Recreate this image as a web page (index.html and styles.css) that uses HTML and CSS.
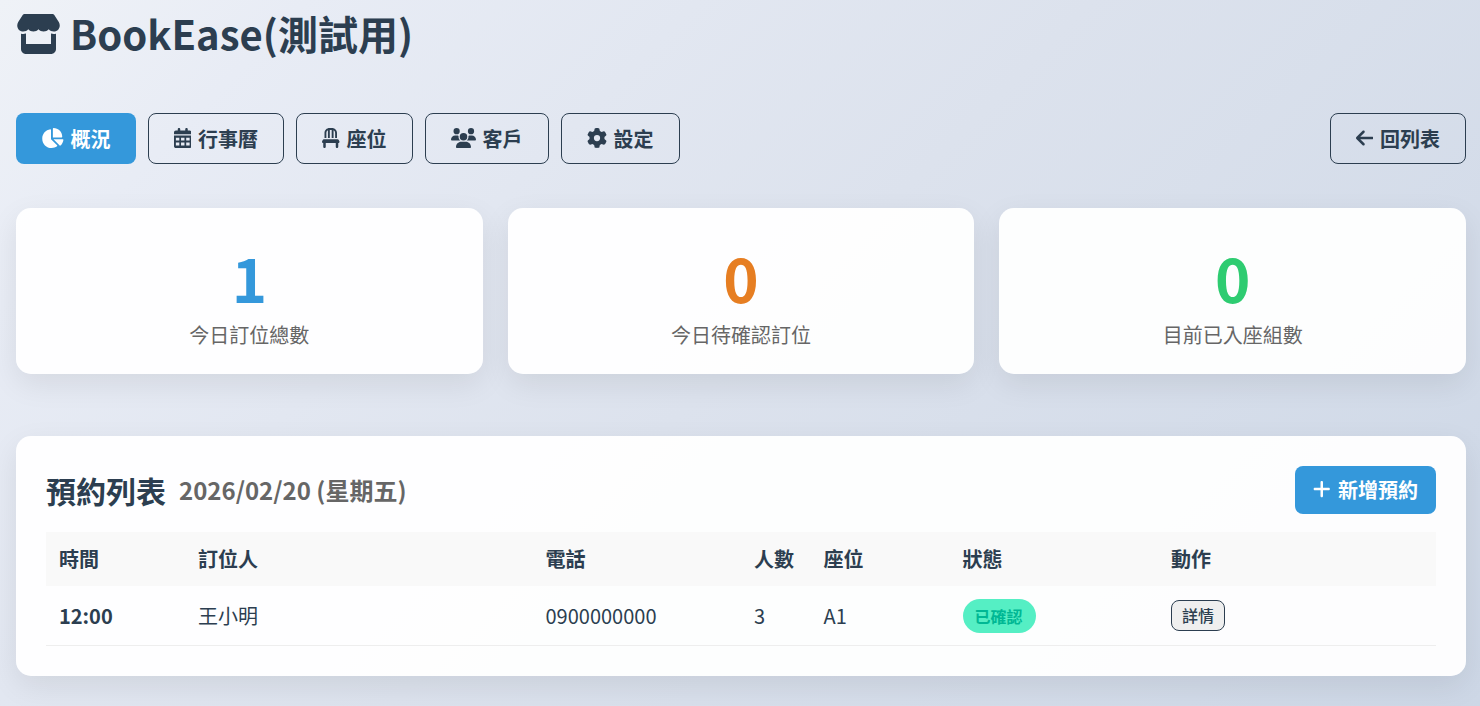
FILE: index.html
```html
<!DOCTYPE html>
<html lang="zh-Hant">
<head>
<meta charset="utf-8">
<title>BookEase</title>
<link rel="stylesheet" href="styles.css">
</head>
<body>
<div class="page">
  <header class="header">
    <svg class="header-icon" viewBox="0 0 576 512" aria-hidden="true"><path d="M547.6 103.8L490.3 13.1C485.2 5 476.1 0 466.4 0L109.6 0C99.9 0 90.8 5 85.7 13.1L28.3 103.8c-29.6 46.8-3.4 111.9 51.9 119.4c4 .5 8.1 .8 12.1 .8c26.1 0 49.3-11.4 65.2-29c15.9 17.6 39.1 29 65.2 29c26.1 0 49.3-11.4 65.2-29c15.9 17.6 39.1 29 65.2 29c26.2 0 49.3-11.4 65.2-29c16 17.6 39.1 29 65.2 29c4.1 0 8.1-.3 12.1-.8c55.5-7.4 81.8-72.5 52.1-119.4zM499.7 254.9l-.1 0c-5.3 .7-10.7 1.1-16.2 1.1c-12.4 0-24.3-1.9-35.4-5.3L448 384l-320 0 0-133.4c-11.2 3.5-23.2 5.4-35.6 5.4c-5.5 0-11-.4-16.3-1.1l-.1 0c-4.1-.6-8.1-1.3-12-2.3L64 384l0 64c0 35.3 28.7 64 64 64l320 0c35.3 0 64-28.7 64-64l0-64 0-131.4c-4 1-8 1.8-12.3 2.3z"/></svg>
    <h1 class="title">BookEase(測試用)</h1>
  </header>

  <nav class="nav">
    <button class="btn btn-primary" type="button"><svg class="icon" viewBox="0 0 576 512" aria-hidden="true"><path d="M304 240V16.6c0-9 7-16.6 16-16.6C443.7 0 544 100.3 544 224c0 9-7.6 16-16.6 16H304zM32 272C32 150.7 122.1 50.3 239 34.3c9.2-1.3 17 6.1 17 15.4V288L412.5 444.5c6.7 6.7 6.2 17.7-1.5 23.1C371.8 495.6 323.8 512 272 512C139.5 512 32 404.6 32 272zm526.4 16c9.3 0 16.6 7.8 15.4 17c-7.7 55.9-34.6 105.6-73.9 142.3c-6 5.6-15.4 5.2-21.2-.7L320 288H558.4z"/></svg>概況</button>
    <button class="btn" type="button"><svg class="icon" viewBox="0 0 448 512" aria-hidden="true"><path fill-rule="evenodd" d="M128 0c17.7 0 32 14.3 32 32V64H288V32c0-17.7 14.3-32 32-32s32 14.3 32 32V64h48c26.5 0 48 21.5 48 48v48H0V112C0 85.5 21.5 64 48 64H96V32c0-17.7 14.3-32 32-32zM0 192H448V464c0 26.5-21.5 48-48 48H48c-26.5 0-48-21.5-48-48zM48 248v72h88v-72zM180 248v72h88v-72zM312 248v72h88v-72zM48 368v80h88v-80zM180 368v80h88v-80zM312 368v80h88v-80z"/></svg>行事曆</button>
    <button class="btn" type="button"><svg class="icon" viewBox="0 0 448 512" aria-hidden="true"><path d="M248 48V256h48V58.7c23.9 13.8 40 39.7 40 69.3V256h48V128C384 57.3 326.7 0 256 0H192C121.3 0 64 57.3 64 128V256h48V128c0-29.6 16.1-55.5 40-69.3V256h48V48h48zM48 288c-12.1 0-23.2 6.8-28.6 17.7l-16 32c-5 9.9-4.4 21.7 1.4 31.1S20.9 384 32 384l0 96c0 17.7 14.3 32 32 32s32-14.3 32-32V384H352v96c0 17.7 14.3 32 32 32s32-14.3 32-32V384c11.1 0 21.4-5.7 27.2-15.2s6.4-21.2 1.4-31.1l-16-32C423.2 294.8 412.1 288 400 288H48z"/></svg>座位</button>
    <button class="btn" type="button"><svg class="icon" viewBox="0 0 640 512" aria-hidden="true"><path d="M144 0a80 80 0 1 1 0 160A80 80 0 1 1 144 0zM512 0a80 80 0 1 1 0 160A80 80 0 1 1 512 0zM0 298.7C0 239.8 47.8 192 106.7 192h42.7c15.9 0 31 3.5 44.6 9.7c-1.3 7.2-1.9 14.7-1.9 22.3c0 38.2 16.8 72.5 43.3 96c-.2 0-.4 0-.7 0H21.3C9.6 320 0 310.4 0 298.7zM405.3 320c-.2 0-.4 0-.7 0c26.6-23.5 43.3-57.8 43.3-96c0-7.6-.7-15-1.9-22.3c13.6-6.3 28.7-9.7 44.6-9.7h42.7C592.2 192 640 239.8 640 298.7c0 11.8-9.6 21.3-21.3 21.3H405.3zM224 224a96 96 0 1 1 192 0 96 96 0 1 1 -192 0zM128 485.3C128 411.7 187.7 352 261.3 352H378.7C452.3 352 512 411.7 512 485.3c0 14.7-11.9 26.7-26.7 26.7H154.7c-14.7 0-26.7-11.9-26.7-26.7z"/></svg>客戶</button>
    <button class="btn" type="button"><svg class="icon" viewBox="0 0 512 512" aria-hidden="true"><path d="M495.9 166.6c3.2 8.7 .5 18.4-6.4 24.6l-43.3 39.4c1.1 8.3 1.7 16.8 1.7 25.4s-.6 17.1-1.7 25.4l43.3 39.4c6.9 6.2 9.6 15.9 6.4 24.6c-4.4 11.9-9.7 23.3-15.8 34.3l-4.7 8.1c-6.6 11-14 21.4-22.1 31.2c-5.9 7.2-15.7 9.6-24.5 6.8l-55.7-17.7c-13.4 10.3-28.2 18.9-44 25.4l-12.5 57.1c-2 9.1-9 16.3-18.2 17.8c-13.8 2.3-28 3.5-42.5 3.5s-28.7-1.2-42.5-3.5c-9.2-1.5-16.2-8.7-18.2-17.8l-12.5-57.1c-15.8-6.5-30.6-15.1-44-25.4L83.1 425.9c-8.8 2.8-18.6 .3-24.5-6.8c-8.1-9.8-15.5-20.2-22.1-31.2l-4.7-8.1c-6.1-11-11.4-22.4-15.8-34.3c-3.2-8.7-.5-18.4 6.4-24.6l43.3-39.4C64.6 273.1 64 264.6 64 256s.6-17.1 1.7-25.4L22.4 191.2c-6.9-6.2-9.6-15.9-6.4-24.6c4.4-11.9 9.7-23.3 15.8-34.3l4.7-8.1c6.6-11 14-21.4 22.1-31.2c5.9-7.2 15.7-9.6 24.5-6.8l55.7 17.7c13.4-10.3 28.2-18.9 44-25.4l12.5-57.1c2-9.1 9-16.3 18.2-17.8C227.3 1.2 241.5 0 256 0s28.7 1.2 42.5 3.5c9.2 1.5 16.2 8.7 18.2 17.8l12.5 57.1c15.8 6.5 30.6 15.1 44 25.4l55.7-17.7c8.8-2.8 18.6-.3 24.5 6.8c8.1 9.8 15.5 20.2 22.1 31.2l4.7 8.1c6.1 11 11.4 22.4 15.8 34.3zM256 336a80 80 0 1 0 0-160 80 80 0 1 0 0 160z"/></svg>設定</button>
    <a class="btn btn-back" href="#"><svg class="icon" viewBox="0 0 448 512" aria-hidden="true"><path d="M9.4 233.4c-12.5 12.5-12.5 32.8 0 45.3l160 160c12.5 12.5 32.8 12.5 45.3 0s12.5-32.8 0-45.3L109.2 288 416 288c17.7 0 32-14.3 32-32s-14.3-32-32-32l-306.7 0L214.6 118.6c12.5-12.5 12.5-32.8 0-45.3s-32.8-12.5-45.3 0l-160 160z"/></svg>回列表</a>
  </nav>

  <section class="stats">
    <div class="card stat"><div class="stat-value stat-blue">1</div><div class="stat-label">今日訂位總數</div></div>
    <div class="card stat"><div class="stat-value stat-orange">0</div><div class="stat-label">今日待確認訂位</div></div>
    <div class="card stat"><div class="stat-value stat-green">0</div><div class="stat-label">目前已入座組數</div></div>
  </section>

  <section class="card list">
    <div class="list-head">
      <h2 class="list-title">預約列表 <span class="list-date">2026/02/20 (星期五)</span></h2>
      <button class="btn btn-primary btn-add" type="button"><svg class="icon" viewBox="0 0 448 512" aria-hidden="true"><path d="M256 80c0-17.7-14.3-32-32-32s-32 14.3-32 32V224H48c-17.7 0-32 14.3-32 32s14.3 32 32 32H192V432c0 17.7 14.3 32 32 32s32-14.3 32-32V288H400c17.7 0 32-14.3 32-32s-14.3-32-32-32H256V80z"/></svg>新增預約</button>
    </div>
    <table class="table">
      <colgroup><col class="w10"><col class="w25"><col class="w15"><col class="w5"><col class="w10"><col class="w15"><col class="w20"></colgroup>
      <thead>
        <tr><th>時間</th><th>訂位人</th><th>電話</th><th>人數</th><th>座位</th><th>狀態</th><th>動作</th></tr>
      </thead>
      <tbody>
        <tr><td class="time">12:00</td><td>王小明</td><td>0900000000</td><td>3</td><td>A1</td><td><span class="badge">已確認</span></td><td><button class="btn-detail" type="button">詳情</button></td></tr>
      </tbody>
    </table>
  </section>
</div>
</body>
</html>
```
FILE: styles.css
```css
* {
  box-sizing: border-box;
}

html {
  min-height: 100%;
  background: linear-gradient(135deg, #eff2f7 0%, #e8ecf5 14%, #dce2ed 50%, #cdd7e6 100%);
}

body {
  margin: 0;
  font-family: "Noto Sans CJK TC", "Noto Sans", sans-serif;
  font-size: 20px;
  line-height: 30px;
  color: #2c3e50;
}

.page {
  padding: 3px 14px 30px 16px;
}

.header {
  display: flex;
  align-items: center;
  gap: 9px;
  margin-bottom: 50px;
}

.header-icon {
  height: 40px;
  margin-top: 2px;
  fill: currentColor;
}

.title {
  margin: 0;
  font-size: 40px;
  line-height: 60px;
  font-weight: 700;
}

.nav {
  display: flex;
  flex-wrap: wrap;
  gap: 12px;
  margin-bottom: 44px;
}

.btn {
  display: inline-flex;
  align-items: center;
  gap: 7px;
  min-height: 51px;
  padding: 0 25px;
  border: 1px solid #2c3e50;
  border-radius: 8px;
  background: transparent;
  color: #2c3e50;
  font: inherit;
  font-weight: 700;
  text-decoration: none;
  white-space: nowrap;
}

.btn-primary {
  border: 0;
  background: #3498db;
  color: #fff;
}

.btn-back {
  margin-left: auto;
}

.icon {
  height: 20px;
  margin-bottom: 2px;
  fill: currentColor;
}

.card {
  border-radius: 15px;
  background: rgba(255, 255, 255, 0.95);
  box-shadow: 0 10px 30px rgba(0, 0, 0, 0.08);
}

.stats {
  display: grid;
  grid-template-columns: repeat(3, 1fr);
  gap: 25px;
  margin-bottom: 62px;
}

.stat {
  padding: 25px 25px 24px;
  text-align: center;
}

.stat-value {
  font-size: 60px;
  line-height: 87px;
  font-weight: 700;
}

.stat-blue {
  color: #3498db;
}

.stat-orange {
  color: #e67e22;
}

.stat-green {
  color: #2ecc71;
}

.stat-label {
  color: #666;
}

.list {
  padding: 30px;
}

.list-head {
  display: flex;
  align-items: center;
  justify-content: space-between;
  margin-bottom: 18px;
}

.list-title {
  display: flex;
  align-items: center;
  gap: 13px;
  margin: 0;
  font-size: 30px;
  line-height: 48px;
  font-weight: 700;
}

.list-date {
  font-size: 24px;
  color: #666;
}

.btn-add {
  gap: 8px;
  min-height: 48px;
  padding: 0 18px;
}

.table {
  width: 100%;
  table-layout: fixed;
  border-collapse: separate;
  border-spacing: 0;
}

.w5 { width: 5%; }
.w10 { width: 10%; }
.w15 { width: 15%; }
.w20 { width: 20%; }
.w25 { width: 25%; }

.table th,
.table td {
  padding: 12px 13px;
  text-align: left;
  vertical-align: middle;
  white-space: nowrap;
}

.table th {
  background: #f9f9f9;
  font-weight: 700;
}

.table th:last-child {
  padding-right: 0;
}

.table td {
  height: 60px;
  border-bottom: 1px solid #eee;
}

.table .time {
  font-weight: 700;
}

.badge {
  display: block;
  width: fit-content;
  padding: 5px 13px 5px 12px;
  border-radius: 17px;
  background: #55efc4;
  color: #00b894;
  font-size: 16px;
  line-height: 24px;
  font-weight: 700;
}

.btn-detail {
  display: block;
  padding: 3px 10px;
  border: 1px solid #2c3e50;
  border-radius: 8px;
  background: #efefef;
  color: #2c3e50;
  font: inherit;
  font-size: 16px;
  line-height: 23px;
  font-weight: 500;
}
```
